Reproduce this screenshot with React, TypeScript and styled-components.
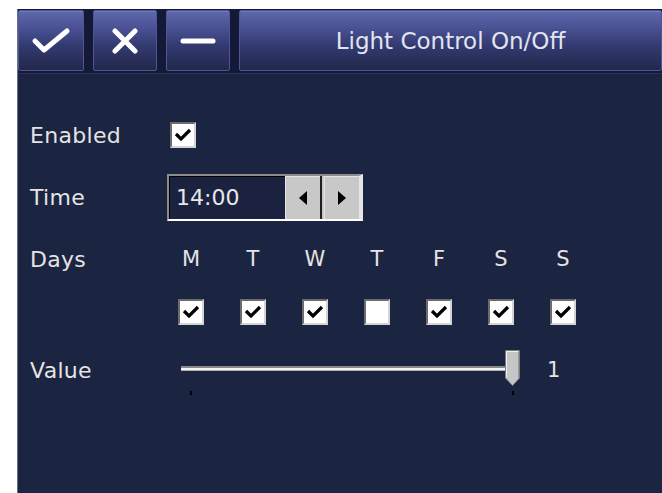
import React from 'react';
import styled, { createGlobalStyle } from 'styled-components';

const GlobalStyle = createGlobalStyle`
  html, body {
    margin: 0;
    padding: 0;
    background: #ffffff;
  }
  body {
    font-family: "DejaVu Sans", sans-serif;
  }
`;

const days = [
  { letter: 'M', on: true },
  { letter: 'T', on: true },
  { letter: 'W', on: true },
  { letter: 'T', on: false },
  { letter: 'F', on: true },
  { letter: 'S', on: true },
  { letter: 'S', on: true },
];

const Tick = () => (
  <svg width="18" height="14" viewBox="0 0 18 14">
    <polyline points="2,6 7,11 16,2" fill="none" stroke="#000" strokeWidth="3.2" />
  </svg>
);

const CheckGlyph = () => (
  <svg width="40" height="28" viewBox="0 0 40 28">
    <polyline points="4,14 13,23 36,4" fill="none" stroke="#fff" strokeWidth="5" strokeLinecap="round" strokeLinejoin="round" />
  </svg>
);

const CrossGlyph = () => (
  <svg width="28" height="26" viewBox="0 0 28 26">
    <path d="M4 3 L24 23 M24 3 L4 23" stroke="#fff" strokeWidth="5" strokeLinecap="round" />
  </svg>
);

const DashGlyph = () => (
  <svg width="36" height="8" viewBox="0 0 36 8">
    <path d="M3 4 H33" stroke="#fff" strokeWidth="5" strokeLinecap="round" />
  </svg>
);

const Arrow = ({ dir }: { dir: 'left' | 'right' }) => (
  <svg width="8" height="14" viewBox="0 0 8 14">
    {dir === 'left' ? <path d="M8 0 L0 7 L8 14 Z" fill="#000" /> : <path d="M0 0 L8 7 L0 14 Z" fill="#000" />}
  </svg>
);

const Thumb = () => (
  <svg width="15" height="36" viewBox="0 0 15 36">
    <path d="M0.5 0.5 H14.5 V28 L7.5 35.5 L0.5 28 Z" fill="#c6c6c6" stroke="#7c7c7c" />
    <path d="M1.5 1.5 H13 M1.5 1.5 V27.5" stroke="#f0f0f0" fill="none" />
    <path d="M13.5 1.5 V28" stroke="#9a9a9a" />
  </svg>
);

export default function App() {
  return (
    <Page>
      <GlobalStyle />
      <TopMargin />
      <Frame>
        <Panel>
          <Toolbar>
            <ToolButton $width={66}><CheckGlyph /></ToolButton>
            <ToolButton $width={64}><CrossGlyph /></ToolButton>
            <ToolButton $width={64}><DashGlyph /></ToolButton>
            <ToolButton>Light Control On/Off</ToolButton>
          </Toolbar>
          <Body>
            <Row $h={62}>
              <Label>Enabled</Label>
              <CheckBox $offset={10}><Tick /></CheckBox>
            </Row>
            <Row $h={62}>
              <Label>Time</Label>
              <Spinner>
                <SpinValue>14:00</SpinValue>
                <SpinButton><Arrow dir="left" /></SpinButton>
                <SpinSeparator />
                <SpinButton><Arrow dir="right" /></SpinButton>
              </Spinner>
            </Row>
            <Row $h={62}>
              <Label>Days</Label>
              <DayGrid>
                {days.map((d, i) => (
                  <DayLetter key={i}>{d.letter}</DayLetter>
                ))}
              </DayGrid>
            </Row>
            <Row $h={44}>
              <Label />
              <DayGrid>
                {days.map((d, i) => (
                  <CheckBox key={i}>{d.on && <Tick />}</CheckBox>
                ))}
              </DayGrid>
            </Row>
            <Row $h={72}>
              <Label>Value</Label>
              <Slider>
                <Track />
                <ThumbHolder style={{ left: 330 }}><Thumb /></ThumbHolder>
                <TickMark style={{ left: 15 }} />
                <TickMark style={{ left: 337 }} />
              </Slider>
              <SliderValue>1</SliderValue>
            </Row>
          </Body>
        </Panel>
      </Frame>
    </Page>
  );
}

const Page = styled.div`
  width: 662px;
  height: 493px;
  display: flex;
  flex-direction: column;
  overflow: hidden;
`;

const TopMargin = styled.div`
  height: 9px;
  flex: 0 0 auto;
`;

const Frame = styled.div`
  flex: 1;
  display: flex;
  padding-left: 17px;
`;

const Panel = styled.div`
  flex: 1;
  display: flex;
  flex-direction: column;
  background: #1b2441;
  border-left: 1px solid #6a6f86;
`;

const Toolbar = styled.div`
  height: 65px;
  box-sizing: border-box;
  display: flex;
  gap: 9px;
  padding: 1px 0 2px 0;
  background: #131937;
  border-bottom: 1px solid #2b3260;
`;

const ToolButton = styled.div<{ $width?: number }>`
  width: ${({ $width }) => ($width ? `${$width}px` : 'auto')};
  flex: ${({ $width }) => ($width ? '0 0 auto' : '1')};
  box-sizing: border-box;
  display: flex;
  align-items: center;
  justify-content: center;
  border: 1px solid #4e5695;
  border-radius: 2px;
  background: linear-gradient(to bottom, #5f68ac 0%, #4a5295 28%, #333a72 58%, #222849 100%);
  box-shadow: inset 0 1px 0 #7079bb;
  color: #e2e4f0;
  font-family: "DejaVu Sans", sans-serif;
  font-size: 23px;
`;

const Body = styled.div`
  display: flex;
  flex-direction: column;
  padding: 30px 0 0 12px;
`;

const Row = styled.div<{ $h: number }>`
  height: ${({ $h }) => $h}px;
  display: flex;
  align-items: center;
`;

const Label = styled.div`
  width: 130px;
  flex: 0 0 auto;
  color: #e4e4e4;
  font-size: 22px;
  letter-spacing: 0.3px;
`;

const CheckBox = styled.span<{ $offset?: number }>`
  width: 26px;
  height: 26px;
  margin-left: ${({ $offset }) => $offset ?? 0}px;
  box-sizing: border-box;
  display: inline-flex;
  align-items: center;
  justify-content: center;
  background: #ffffff;
  border-style: solid;
  border-width: 2px;
  border-color: #6c6c6c #d4d4d4 #d4d4d4 #6c6c6c;
`;

const Spinner = styled.div`
  margin-left: 7px;
  width: 196px;
  height: 47px;
  box-sizing: border-box;
  display: flex;
  border-style: solid;
  border-width: 2px 4px 2px 2px;
  border-color: #8c8c8c #e6e6e6 #ffffff #8c8c8c;
  background: #1a2240;
  box-shadow: inset 1px 1px 0 #000000;
`;

const SpinValue = styled.div`
  flex: 1;
  display: flex;
  align-items: center;
  padding-left: 7px;
  color: #e8e8e8;
  font-size: 22px;
`;

const SpinButton = styled.div`
  width: 35px;
  display: flex;
  align-items: center;
  justify-content: center;
  background: #c8c8c8;
  border-top: 1px solid #e4e4e4;
  border-left: 1px solid #e4e4e4;
  box-sizing: border-box;
`;

const SpinSeparator = styled.div`
  width: 4px;
  background: #c8c8c8;
  border-left: 2px solid #202020;
  box-sizing: border-box;
`;

const DayGrid = styled.div`
  display: grid;
  grid-template-columns: repeat(7, 62px);
  justify-items: center;
  align-items: center;
`;

const DayLetter = styled.span`
  color: #e4e4e4;
  font-size: 21px;
`;

const Slider = styled.div`
  position: relative;
  margin-left: 15px;
  width: 352px;
  height: 60px;
`;

const Track = styled.div`
  position: absolute;
  left: 6px;
  right: 14px;
  top: 26px;
  height: 5px;
  box-sizing: border-box;
  background: #f4f4f4;
  border-top: 2px solid #8a8a8a;
  border-bottom: 1px solid #b0b0b0;
`;

const ThumbHolder = styled.div`
  position: absolute;
  top: 10px;
  width: 15px;
  height: 36px;
  line-height: 0;
`;

const TickMark = styled.div`
  position: absolute;
  top: 51px;
  width: 2px;
  height: 4px;
  background: #000000;
`;

const SliderValue = styled.span`
  margin-left: 20px;
  color: #e4e4e4;
  font-size: 21px;
`;
